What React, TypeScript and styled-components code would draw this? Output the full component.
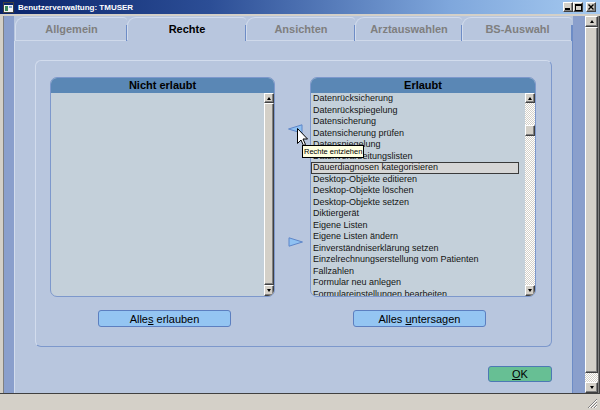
import styled, { createGlobalStyle } from 'styled-components';

const GlobalStyle = createGlobalStyle`
  html, body { margin: 0; padding: 0; background: #d4d0c8; }
  body { font-family: "Liberation Sans", Arial, sans-serif; }
`;

const raised = `
  background: #d4d0c8;
  border: 1px solid;
  border-color: #ffffff #404040 #404040 #ffffff;
  box-shadow: inset -1px -1px 0 #808080;
  box-sizing: border-box;
`;

const Window = styled.div`
  position: relative;
  width: 600px;
  height: 410px;
  overflow: hidden;
  display: flex;
  flex-direction: column;
  background: #d4d0c8;
`;

const TitleBar = styled.div`
  flex: none;
  height: 14px;
  display: flex;
  align-items: center;
  gap: 4px;
  padding: 0 4px 0 3px;
  background: linear-gradient(to right, #0a246a 0%, #2c4e96 35%, #7fa7dc 75%, #a6caf0 100%);
  border-bottom: 2px solid #d4d0c8;
`;

const TitleText = styled.span`
  flex: 1;
  color: #fff;
  font-size: 8px;
  font-weight: bold;
`;

const Controls = styled.div`
  display: flex;
  align-items: center;
`;

const ControlButton = styled.div<{ $gap?: boolean }>`
  ${raised}
  width: 10px;
  height: 10px;
  margin-left: ${p => (p.$gap ? '3px' : '0')};
  display: flex;
  align-items: center;
  justify-content: center;
`;

const Body = styled.div`
  flex: 1;
  display: flex;
  min-height: 0;
`;

const LeftFrame = styled.div`
  width: 4px;
  background: linear-gradient(to right, #d4d0c8 0 3px, #808080 3px 4px);
`;

const RightFrame = styled.div`
  width: 2px;
  background: linear-gradient(to right, #808080 0 1px, #404040 1px 2px);
`;

const SideStrip = styled.div<{ $w: number }>`
  width: ${p => p.$w}px;
  background: #8a9fcc;
`;

const Page = styled.div`
  flex: 1;
  display: flex;
  flex-direction: column;
  background: #b8c6de;
`;

const TabRow = styled.div`
  height: 24px;
  margin-top: 1px;
  display: flex;
  padding-left: 1px;
`;

const Tab = styled.div<{ $active?: boolean; $w: number }>`
  position: relative;
  width: ${p => p.$w}px;
  box-sizing: border-box;
  display: flex;
  align-items: center;
  justify-content: center;
  font-size: 11px;
  font-weight: bold;
  color: ${p => (p.$active ? '#000' : '#7f7f7f')};
  border-top: 1px solid #d2dced;
  border-left: 1px solid #d2dced;
  border-bottom: 1px solid ${p => (p.$active ? 'transparent' : '#cfd9ea')};
  border-top-left-radius: 9px;
  border-top-right-radius: 4px;

  &::after {
    content: '';
    position: absolute;
    right: -1px;
    top: 7px;
    bottom: -1px;
    width: 2px;
    background: #6d8cc6;
  }
`;

const PageBody = styled.div`
  flex: 1;
  display: flex;
  flex-direction: column;
  padding: 19px 20px 0 20px;
  border-left: 1px solid #d2dced;
  border-right: 1px solid #6d8cc6;
`;

const GroupBox = styled.div`
  width: 517px;
  height: 287px;
  box-sizing: border-box;
  border: 1px solid;
  border-color: #d2dced #7d98cc #7d98cc #d2dced;
  border-radius: 6px;
  padding: 16px 0 0 14px;
  display: grid;
  grid-template-columns: 225px 35px 226px;
  grid-template-rows: 220px 17px;
  row-gap: 13px;
`;

const ListBox = styled.div`
  border: 1px solid #7d98cc;
  border-radius: 7px;
  overflow: hidden;
  display: flex;
  flex-direction: column;
  background: #c4d0da;
`;

const ListHeader = styled.div`
  height: 15px;
  flex: none;
  line-height: 15px;
  text-align: center;
  background: #5a87b5;
  color: #000;
  font-size: 11px;
  font-weight: bold;
`;

const ListContent = styled.div`
  flex: 1;
  display: flex;
  min-height: 0;
`;

const Items = styled.div`
  flex: 1;
  overflow: hidden;
  padding: 0 6px 0 0;
`;

const Item = styled.div<{ $selected?: boolean }>`
  height: 11.5px;
  line-height: 11.5px;
  padding-left: 2px;
  font-size: 9px;
  color: #141414;
  white-space: nowrap;
  background: ${p => (p.$selected ? '#d6d6d6' : 'transparent')};
  box-shadow: ${p => (p.$selected ? 'inset 0 0 0 1px #3a3a3a' : 'none')};
`;

const Scroll = styled.div<{ $w: number }>`
  width: ${p => p.$w}px;
  flex: none;
  display: flex;
  flex-direction: column;
  background: #d4d0c8;
`;

const ScrollButton = styled.div<{ $h: number }>`
  ${raised}
  height: ${p => p.$h}px;
  flex: none;
  display: flex;
  align-items: center;
  justify-content: center;
`;

const Glyph = styled.div<{ $down?: boolean }>`
  width: 0;
  height: 0;
  border-left: 2.5px solid transparent;
  border-right: 2.5px solid transparent;
  ${p => (p.$down ? 'border-top: 3px solid #000;' : 'border-bottom: 3px solid #000;')}
`;

const Checker = styled.div<{ $h?: number }>`
  ${p => (p.$h ? `height: ${p.$h}px; flex: none;` : 'flex: 1;')}
  background: repeating-conic-gradient(#ffffff 0 25%, #d4d0c8 0 50%) 0 0 / 2px 2px;
`;

const Thumb = styled.div<{ $h?: number }>`
  ${raised}
  ${p => (p.$h ? `height: ${p.$h}px; flex: none;` : 'flex: 1;')}
`;

const ArrowCol = styled.div`
  display: flex;
  flex-direction: column;
  align-items: center;
  padding: 47px 0 0 5px;
`;

const ArrowIcon = styled.svg<{ $mt?: number }>`
  display: block;
  margin-top: ${p => p.$mt ?? 0}px;
`;

const ActionButton = styled.button<{ $ml: number }>`
  justify-self: start;
  margin-left: ${p => p.$ml}px;
  width: 133px;
  height: 17px;
  padding: 0;
  background: #94c5f2;
  border: 1px solid #5c7fc0;
  border-radius: 3px;
  font-family: "Liberation Sans", Arial, sans-serif;
  font-size: 11px;
  color: #000;
`;

const OkRow = styled.div`
  margin-top: 19px;
  display: flex;
  justify-content: flex-end;
`;

const OkButton = styled.button`
  width: 64px;
  height: 16px;
  padding: 0;
  background: #67bf94;
  border: 1px solid #4d79b4;
  border-radius: 3px;
  font-family: "Liberation Sans", Arial, sans-serif;
  font-size: 11px;
  color: #000;
`;

const BottomBar = styled.div`
  height: 15px;
  flex: none;
  border-top: 1px solid #404040;
  display: flex;
  justify-content: flex-end;
  align-items: flex-end;
  padding: 0 2px 1px 0;
  background: #d4d0c8;
`;

const Tooltip = styled.div`
  position: absolute;
  left: 302px;
  top: 145px;
  padding: 0 1px;
  height: 11px;
  line-height: 11px;
  background: #ffffe1;
  border: 1px solid #000;
  font-size: 7.5px;
  color: #000;
  white-space: nowrap;
`;

const Cursor = styled.svg`
  position: absolute;
  left: 297px;
  top: 128px;
`;

const tabs = [
  { label: 'Allgemein', w: 112 },
  { label: 'Rechte', w: 119, active: true },
  { label: 'Ansichten', w: 109 },
  { label: 'Arztauswahlen', w: 107 },
  { label: 'BS-Auswahl', w: 110 },
];

const allowed = [
  'Datenrücksicherung',
  'Datenrückspiegelung',
  'Datensicherung',
  'Datensicherung prüfen',
  'Datenspiegelung',
  'Datenverarbeitungslisten',
  'Dauerdiagnosen kategorisieren',
  'Desktop-Objekte editieren',
  'Desktop-Objekte löschen',
  'Desktop-Objekte setzen',
  'Diktiergerät',
  'Eigene Listen',
  'Eigene Listen ändern',
  'Einverständniserklärung setzen',
  'Einzelrechnungserstellung vom Patienten',
  'Fallzahlen',
  'Formular neu anlegen',
  'Formulareinstellungen bearbeiten',
];

const AppIcon = () => (
  <svg width="11" height="11" viewBox="0 0 11 11">
    <rect x="0.5" y="0.5" width="10" height="10" fill="#f4f4f4" stroke="#404040" />
    <rect x="1" y="1" width="9" height="2" fill="#0a246a" />
    <rect x="2" y="4" width="3" height="5" fill="#3a8a5a" />
    <rect x="6" y="4" width="3" height="2" fill="#7fa7dc" />
  </svg>
);

export default function App() {
  return (
    <Window>
      <GlobalStyle />
      <TitleBar>
        <AppIcon />
        <TitleText>Benutzerverwaltung: TMUSER</TitleText>
        <Controls>
          <ControlButton>
            <svg width="6" height="6" viewBox="0 0 6 6"><rect x="0" y="4" width="5" height="2" fill="#000" /></svg>
          </ControlButton>
          <ControlButton>
            <svg width="7" height="7" viewBox="0 0 7 7"><rect x="0.5" y="0.5" width="6" height="6" fill="none" stroke="#000" /><rect x="0" y="0" width="7" height="2" fill="#000" /></svg>
          </ControlButton>
          <ControlButton $gap>
            <svg width="6" height="6" viewBox="0 0 6 6"><path d="M0.5 0.5 L5.5 5.5 M5.5 0.5 L0.5 5.5" stroke="#000" strokeWidth="1.4" /></svg>
          </ControlButton>
        </Controls>
      </TitleBar>

      <Body>
        <LeftFrame />
        <SideStrip $w={10} />
        <Page>
          <TabRow>
            {tabs.map(t => (
              <Tab key={t.label} $w={t.w} $active={t.active}>{t.label}</Tab>
            ))}
          </TabRow>
          <PageBody>
            <GroupBox>
              <ListBox>
                <ListHeader>Nicht erlaubt</ListHeader>
                <ListContent>
                  <Items />
                  <Scroll $w={10}>
                    <ScrollButton $h={10}><Glyph /></ScrollButton>
                    <Thumb />
                    <ScrollButton $h={11}><Glyph $down /></ScrollButton>
                  </Scroll>
                </ListContent>
              </ListBox>

              <ArrowCol>
                <ArrowIcon width="15" height="10" viewBox="0 0 15 10">
                  <polygon points="0.5,5 14,0.8 14,9.2" fill="#8fc1f2" stroke="#5f86c8" strokeWidth="1" />
                </ArrowIcon>
                <ArrowIcon width="15" height="10" viewBox="0 0 15 10" $mt={103}>
                  <polygon points="14.5,5 1,0.8 1,9.2" fill="#8fc1f2" stroke="#5f86c8" strokeWidth="1" />
                </ArrowIcon>
              </ArrowCol>

              <ListBox>
                <ListHeader>Erlaubt</ListHeader>
                <ListContent>
                  <Items>
                    {allowed.map((a, i) => (
                      <Item key={a} $selected={i === 6}>{a}</Item>
                    ))}
                  </Items>
                  <Scroll $w={10}>
                    <ScrollButton $h={10}><Glyph /></ScrollButton>
                    <Checker $h={22} />
                    <Thumb $h={11} />
                    <Checker />
                    <ScrollButton $h={11}><Glyph $down /></ScrollButton>
                  </Scroll>
                </ListContent>
              </ListBox>

              <ActionButton $ml={48}>Alle<u>s</u> erlauben</ActionButton>
              <div />
              <ActionButton $ml={43}>Alles <u>u</u>ntersagen</ActionButton>
            </GroupBox>
            <OkRow>
              <OkButton><u>O</u>K</OkButton>
            </OkRow>
          </PageBody>
        </Page>
        <SideStrip $w={12} />
        <Scroll $w={13}>
          <ScrollButton $h={11}><Glyph /></ScrollButton>
          <Thumb />
          <Checker $h={9} />
          <ScrollButton $h={11}><Glyph $down /></ScrollButton>
        </Scroll>
        <RightFrame />
      </Body>

      <BottomBar>
        <svg width="11" height="11" viewBox="0 0 11 11">
          <path d="M10 1 L1 10 M10 4 L4 10 M10 7 L7 10" stroke="#808080" strokeWidth="1" />
          <path d="M10 2 L2 10 M10 5 L5 10 M10 8 L8 10" stroke="#ffffff" strokeWidth="1" />
        </svg>
      </BottomBar>

      <Cursor width="12" height="19" viewBox="0 0 12 19">
        <path d="M0.5 0.5 L0.5 15.5 L4 12 L6.5 17.5 L8.5 16.5 L6 11 L10.5 11 Z" fill="#ffffff" stroke="#000" strokeWidth="1" />
      </Cursor>
      <Tooltip>Rechte entziehen</Tooltip>
    </Window>
  );
}
